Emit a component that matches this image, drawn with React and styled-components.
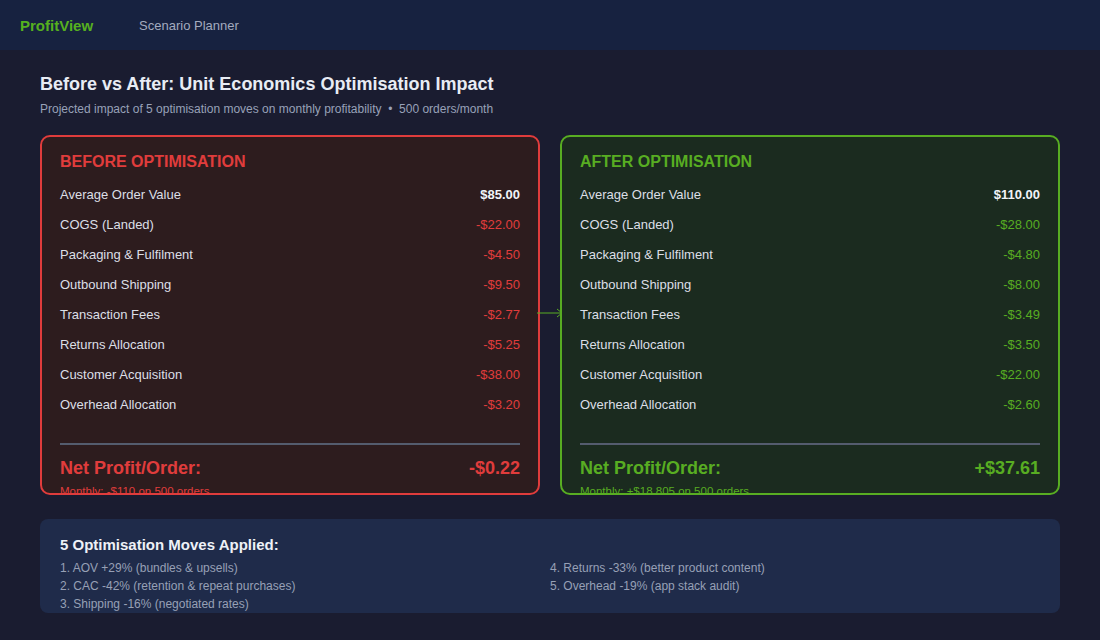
import React from "react";
import styled, { createGlobalStyle } from "styled-components";

const G = createGlobalStyle`
  body{margin:0;background:#1a1c30;font-family:"Liberation Sans",Arial,sans-serif;}
`;
const Header = styled.div`height:50px;background:#172240;display:flex;align-items:center;padding:0 20px;gap:46px;`;
const Logo = styled.div`color:#56b01f;font-weight:bold;font-size:15px;`;
const Nav = styled.div`color:#a3abbf;font-size:13px;`;
const Main = styled.div`padding:24px 40px 0;`;
const H1 = styled.h1`margin:0;color:#e8ecf4;font-size:18px;font-weight:bold;`;
const Sub = styled.div`margin-top:7px;color:#98a1b8;font-size:12px;`;
const Cards = styled.div`margin-top:19px;display:grid;grid-template-columns:1fr 1fr;gap:20px;position:relative;`;
const Card = styled.div`height:360px;box-sizing:border-box;border:2px solid ${p=>p.c};background:${p=>p.bg};border-radius:10px;padding:16px 18px 0;overflow:hidden;`;
const CardTitle = styled.div`color:${p=>p.c};font-size:16px;font-weight:bold;margin-bottom:8px;`;
const Row = styled.div`display:flex;justify-content:space-between;height:30px;align-items:center;font-size:13px;color:#dcdfe6;`;
const Val = styled.span`color:${p=>p.c};font-weight:${p=>p.b?"bold":"normal"};`;
const Divider = styled.div`height:2px;background:#545c6e;margin-top:24px;`;
const Net = styled.div`display:flex;justify-content:space-between;color:${p=>p.c};font-weight:bold;font-size:18px;margin-top:13px;`;
const Monthly = styled.div`color:${p=>p.c};font-size:11.5px;margin-top:6px;`;
const Arrow = styled.svg`position:absolute;left:496px;top:170px;`;
const Moves = styled.div`margin-top:24px;background:#1f2b4a;border-radius:8px;padding:17px 20px 0;height:94px;box-sizing:border-box;`;
const MovesTitle = styled.div`color:#eef1f7;font-weight:bold;font-size:15px;margin-bottom:8px;`;
const MoveGrid = styled.div`display:grid;grid-template-columns:1fr 1fr;grid-auto-flow:column;grid-template-rows:repeat(3,18px);color:#97a0b6;font-size:12px;`;

const labels=["Average Order Value","COGS (Landed)","Packaging & Fulfilment","Outbound Shipping","Transaction Fees","Returns Allocation","Customer Acquisition","Overhead Allocation"];
const before=["$85.00","-$22.00","-$4.50","-$9.50","-$2.77","-$5.25","-$38.00","-$3.20"];
const after=["$110.00","-$28.00","-$4.80","-$8.00","-$3.49","-$3.50","-$22.00","-$2.60"];

function Panel({c,bg,title,vals,net,monthly}){
  return <Card c={c} bg={bg}>
    <CardTitle c={c}>{title}</CardTitle>
    {labels.map((l,i)=><Row key={l}><span>{l}</span><Val c={i===0?"#f2f4f8":c} b={i===0}>{vals[i]}</Val></Row>)}
    <Divider/>
    <Net c={c}><span>Net Profit/Order:</span><span>{net}</span></Net>
    <Monthly c={c}>{monthly}</Monthly>
  </Card>;
}

export default function App(){
  return <>
    <G/>
    <Header><Logo>ProfitView</Logo><Nav>Scenario Planner</Nav></Header>
    <Main>
      <H1>Before vs After: Unit Economics Optimisation Impact</H1>
      <Sub>Projected impact of 5 optimisation moves on monthly profitability &nbsp;•&nbsp; 500 orders/month</Sub>
      <Cards>
        <Panel c="#e03c3c" bg="#2d1c1e" title="BEFORE OPTIMISATION" vals={before} net="-$0.22" monthly="Monthly: -$110 on 500 orders"/>
        <Panel c="#58ad22" bg="#1b2b1f" title="AFTER OPTIMISATION" vals={after} net="+$37.61" monthly="Monthly: +$18,805 on 500 orders"/>
        <Arrow width="28" height="16" viewBox="0 0 28 16"><path d="M1 8H26M21 4L26 8L21 12" stroke="#58ad22" strokeWidth="1" fill="none"/></Arrow>
      </Cards>
      <Moves>
        <MovesTitle>5 Optimisation Moves Applied:</MovesTitle>
        <MoveGrid>
          <div>1. AOV +29% (bundles &amp; upsells)</div>
          <div>2. CAC -42% (retention &amp; repeat purchases)</div>
          <div>3. Shipping -16% (negotiated rates)</div>
          <div>4. Returns -33% (better product content)</div>
          <div>5. Overhead -19% (app stack audit)</div>
        </MoveGrid>
      </Moves>
    </Main>
  </>;
}
